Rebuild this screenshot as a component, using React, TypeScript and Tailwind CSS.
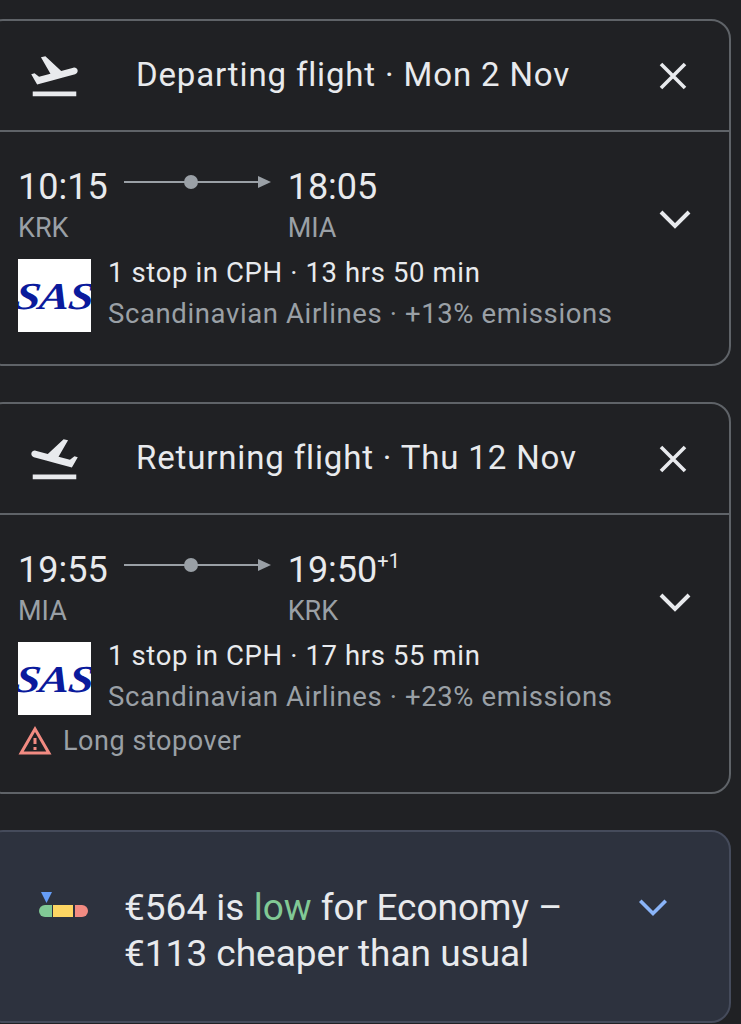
import { ReactNode } from 'react'

const TAKEOFF =
  'M2.5 19h19v2h-19zm19.57-9.36c-.21-.8-1.04-1.28-1.84-1.06L14.92 10l-6.9-6.43-1.93.51 4.14 7.17-4.97 1.33-1.97-1.54-1.45.39 1.82 3.16.77 1.33 1.6-.43 5.31-1.42 4.35-1.16L21 11.49c.81-.23 1.28-1.05 1.07-1.85z'

function Chevron({ className }: { className: string }) {
  return (
    <svg viewBox="0 0 32 22" className={className} fill="none" stroke="currentColor" strokeWidth="4">
      <path d="M2 3l14 14L30 3" />
    </svg>
  )
}

function SasLogo() {
  return (
    <div className="w-[73px] h-[73px] bg-white flex items-center justify-center shrink-0 overflow-hidden">
      <span className="font-['Liberation_Serif',serif] italic font-bold text-[38px] leading-none tracking-[-1px] text-[#0a1a9c] scale-x-[1.2] -skew-x-6">
        SAS
      </span>
    </div>
  )
}

function FlightCard(props: {
  returning?: boolean
  title: string
  dep: string
  arr: ReactNode
  from: string
  to: string
  summary: string
  emissions: string
  children?: ReactNode
}) {
  return (
    <section className="border-2 border-[#5f6368] rounded-[20px]">
      <header className="h-[111px] flex items-center border-b-2 border-[#5f6368] pl-[42px] pr-[42px]">
        <svg
          viewBox="0 0 24 24"
          className={props.returning ? 'w-[55px] h-[55px] fill-[#e8eaed] shrink-0 -scale-x-100' : 'w-[55px] h-[55px] fill-[#e8eaed] shrink-0'}
        >
          <path d={TAKEOFF} />
        </svg>
        <h2 className="ml-[54px] -mt-[2px] text-[33px] font-normal tracking-[0.85px] text-[#e8eaed] flex-1 whitespace-nowrap">
          {props.title}
        </h2>
        <svg viewBox="0 0 28 28" className="w-[28px] h-[28px] stroke-[#e8eaed] shrink-0" strokeWidth="3.6" fill="none">
          <path d="M2 2l24 24M26 2L2 26" />
        </svg>
      </header>
      <div className="pl-[33px] pr-[38px] pt-[34px] pb-[30px] relative">
        <div className="flex">
          <div>
            <div className="flex items-center h-[42px]">
              <span className="text-[36px] leading-[42px] text-[#e8eaed]">{props.dep}</span>
              <svg viewBox="0 0 148 16" className="ml-[16px] w-[148px] h-[16px] fill-[#9aa0a6] -mt-[10px]">
                <rect x="0" y="7" width="136" height="2" />
                <circle cx="67" cy="8" r="7" />
                <path d="M134 2l13 6-13 6z" />
              </svg>
            </div>
            <div className="text-[27px] leading-[32px] text-[#9aa0a6] mt-[4px]">{props.from}</div>
          </div>
          <div className="ml-[16px]">
            <div className="text-[36px] leading-[42px] text-[#e8eaed] h-[42px] whitespace-nowrap">{props.arr}</div>
            <div className="text-[27px] leading-[32px] text-[#9aa0a6] mt-[4px]">{props.to}</div>
          </div>
        </div>
        <Chevron className="absolute right-[38px] top-[77px] w-[32px] h-[22px] text-[#e8eaed]" />
        <div className="flex mt-[15px]">
          <SasLogo />
          <div className="ml-[17px] -mt-[7px]">
            <div className="text-[27.5px] leading-[41px] tracking-[0.62px] text-[#e8eaed] whitespace-nowrap">
              {props.summary}
            </div>
            <div className="text-[27.5px] leading-[41px] tracking-[0.62px] text-[#9aa0a6] whitespace-nowrap">
              {props.emissions}
            </div>
          </div>
        </div>
        {props.children}
      </div>
    </section>
  )
}

export default function App() {
  return (
    <div className="w-[741px] h-[1024px] overflow-hidden bg-[#202124] font-['Roboto',sans-serif]">
      <div className="w-[748px] -ml-[17px] pt-[19px] flex flex-col gap-[36px]">
        <FlightCard
          title="Departing flight · Mon 2 Nov"
          dep="10:15"
          arr="18:05"
          from="KRK"
          to="MIA"
          summary="1 stop in CPH · 13 hrs 50 min"
          emissions="Scandinavian Airlines · +13% emissions"
        />
        <FlightCard
          returning
          title="Returning flight · Thu 12 Nov"
          dep="19:55"
          arr={
            <span>
              19:50<sup className="text-[20px] top-[-14px]">+1</sup>
            </span>
          }
          from="MIA"
          to="KRK"
          summary="1 stop in CPH · 17 hrs 55 min"
          emissions="Scandinavian Airlines · +23% emissions"
        >
          <div className="flex items-center h-[40px] mt-[4px] mb-[1px] -translate-x-[1px]">
            <svg viewBox="0 0 24 24" className="w-[36px] h-[36px] fill-[#f28b82] shrink-0">
              <path d="M12 5.99L19.53 19H4.47L12 5.99M12 2L1 21h22L12 2zm1 14h-2v2h2v-2zm0-6h-2v4h2v-4z" />
            </svg>
            <span className="ml-[10px] text-[27px] tracking-[0.55px] text-[#9aa0a6]">Long stopover</span>
          </div>
        </FlightCard>
        <section className="border-2 border-[#454b5b] rounded-[20px] bg-[#2d323e] h-[193px] flex items-start pt-[53px] pl-[54px] pr-[61px]">
          <svg viewBox="0 0 49 25" className="w-[49px] h-[25px] shrink-0 mt-[7px]">
            <path d="M2 0h11L7.500 11z" fill="#669df6" />
            <path d="M13 13H6a6 6 0 0 0 0 12h7z" fill="#81c995" />
            <rect x="14" y="13" width="20" height="12" fill="#fdd663" />
            <path d="M36 13h7a6 6 0 0 1 0 12h-7z" fill="#f28b82" />
          </svg>
          <p className="ml-[36px] flex-1 text-[37px] leading-[46px] text-[#e8eaed] whitespace-nowrap">
            €564 is <span className="text-[#81c995]">low</span> for Economy –
            <br />
            €113 cheaper than usual
          </p>
          <Chevron className="w-[30px] h-[20px] text-[#8ab4f8] mt-[13px] shrink-0" />
        </section>
      </div>
    </div>
  )
}
